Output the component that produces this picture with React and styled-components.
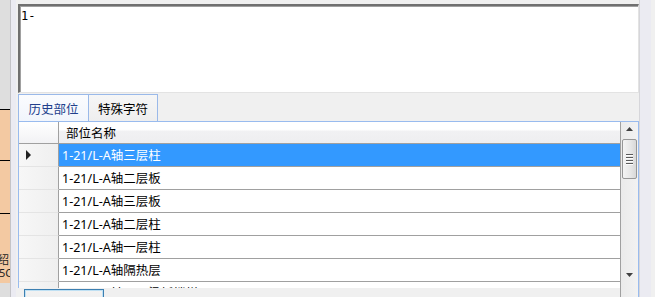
import React from "react";
import styled, { createGlobalStyle } from "styled-components";

const Global = createGlobalStyle`
  html, body { margin: 0; padding: 0; background: #f0f0f0; }
  body { width: 655px; height: 297px; overflow: hidden; }
`;

const UI_FONT = `"Noto Sans", "Noto Sans CJK SC", sans-serif`;

const Page = styled.div`
  display: flex;
  width: 655px;
  height: 297px;
  overflow: hidden;
  background: #f0f0f0;
  font-family: ${UI_FONT};
  font-size: 12px;
  color: #000;
`;

const LeftStrip = styled.div`
  width: 10px;
  flex: none;
  display: flex;
  flex-direction: column;
  background: #dedede;
  overflow: hidden;
`;

const StripGap = styled.div`
  height: ${(p) => p.$h}px;
  flex: none;
`;

const PeachCell = styled.div`
  height: ${(p) => p.$h}px;
  flex: none;
  background: #f3c9a2;
  border-top: ${(p) => (p.$line ? "1px solid #000" : "none")};
  display: flex;
  flex-direction: column;
  justify-content: flex-end;
  gap: 1px;
  overflow: hidden;
  padding-bottom: 4px;
  box-sizing: border-box;
`;

const PeachText = styled.span`
  display: block;
  white-space: nowrap;
  line-height: 12px;
  height: 12px;
  overflow: hidden;
  font-size: 11px;
  margin-left: ${(p) => p.$shift}px;
  color: #222;
`;

const Divider = styled.div`
  width: ${(p) => p.$w}px;
  flex: none;
  box-sizing: border-box;
  border-left: 1px solid ${(p) => p.$line};
  border-right: ${(p) => p.$gap}px solid #f0f0f0;
  background: #ebebf2;
`;

const Main = styled.div`
  position: relative;
  width: 621px;
  flex: none;
  display: flex;
  flex-direction: column;
  padding-top: 4px;
  box-sizing: border-box;
`;

const TextBox = styled.div`
  height: 89px;
  flex: none;
  box-sizing: border-box;
  background: #fff;
  border-top: 2px solid #707070;
  border-left: 2px solid #707070;
  border-right: 1px solid #e3e3e3;
  border-bottom: 1px solid #e3e3e3;
  box-shadow: inset 1px 1px 0 #a0a0a0;
  padding: 3px 1px;
  font-family: "DejaVu Sans Mono", monospace;
  font-size: 12px;
  line-height: 15px;
`;

const TabStrip = styled.div`
  display: flex;
  height: 27px;
  margin-top: 1px;
  flex: none;
`;

const Tab = styled.div`
  width: ${(p) => p.$w}px;
  box-sizing: border-box;
  border: 1px solid #9ab9e9;
  border-bottom: none;
  margin-left: ${(p) => (p.$first ? 0 : -1)}px;
  display: flex;
  align-items: center;
  justify-content: center;
  padding-top: 1px;
  background: ${(p) =>
    p.$active
      ? "linear-gradient(#fbfcfe, #f1f5fc)"
      : "linear-gradient(#f6f6f6, #eeeeee)"};
  color: ${(p) => (p.$active ? "#22408c" : "#000")};
  font-size: 12.5px;
`;

const Grid = styled.div`
  height: 176px;
  flex: none;
  box-sizing: border-box;
  border: 1px solid #99bbee;
  border-bottom: none;
  display: flex;
  overflow: hidden;
  background: #fff;
`;

const Table = styled.div`
  width: 602px;
  flex: none;
  display: flex;
  flex-direction: column;
`;

const Row = styled.div`
  display: flex;
  flex: none;
  height: ${(p) => p.$h}px;
`;

const RowHead = styled.div`
  width: 40px;
  flex: none;
  box-sizing: border-box;
  border-right: 1px solid #a0a0a0;
  border-bottom: 1px solid ${(p) => (p.$header ? "#a0a0a0" : "#e4e4e4")};
  background: ${(p) =>
    p.$header
      ? "linear-gradient(#ffffff, #f2f2f4)"
      : "linear-gradient(90deg, #f7f7f7, #efefef)"};
  display: flex;
  align-items: center;
  padding-left: 7px;
`;

const Cell = styled.div`
  flex: 1;
  box-sizing: border-box;
  border-right: 1px solid #a0a0a0;
  border-bottom: 1px solid #a0a0a0;
  background: ${(p) =>
    p.$header
      ? "linear-gradient(#ffffff 0%, #ffffff 35%, #f1f1f3 45%, #eeeef0 100%)"
      : p.$selected
      ? "#3399ff"
      : "#fff"};
  color: ${(p) => (p.$selected ? "#fff" : "#000")};
  display: flex;
  align-items: center;
  padding-left: ${(p) => (p.$header ? 7 : 3)}px;
  padding-bottom: 1px;
  white-space: nowrap;
  overflow: hidden;
  font-size: 12.5px;
`;

const Pointer = styled.svg`
  display: block;
`;

const ScrollBar = styled.div`
  width: 17px;
  flex: none;
  display: flex;
  flex-direction: column;
  background: linear-gradient(90deg, #ebebeb, #f2f2f2);
`;

const ArrowBox = styled.div`
  height: ${(p) => p.$h}px;
  flex: none;
  display: flex;
  align-items: ${(p) => p.$align};
  justify-content: center;
  padding: ${(p) => p.$pad};
  box-sizing: border-box;
`;

const Thumb = styled.div`
  height: 40px;
  flex: none;
  margin: 0 1px 0 1px;
  box-sizing: border-box;
  border: 1px solid #979797;
  border-radius: 2px;
  background: linear-gradient(90deg, #f4f4f4, #e6e6e6 60%, #d8d8d8);
  display: flex;
  flex-direction: column;
  align-items: center;
  justify-content: center;
  gap: 1px;
`;

const Grip = styled.div`
  width: 7px;
  height: 1px;
  background: #5a5a5a;
  box-shadow: 0 1px 0 #fdfdfd;
  margin-bottom: 1px;
`;

const Track = styled.div`
  flex: 1;
`;

const BottomBar = styled.div`
  position: absolute;
  left: 0;
  top: 288px;
  width: 602px;
  height: 9px;
  background: #f0f0f0;
  padding-left: 6px;
  padding-top: 1px;
  box-sizing: border-box;
`;

const Button = styled.div`
  width: 80px;
  height: 24px;
  box-sizing: border-box;
  border: 1px solid #3c7fb1;
  box-shadow: inset 0 0 0 1px #bfe0f3;
  background: linear-gradient(#f2f2f2, #ebebeb);
`;

const rows = [
  "1-21/L-A轴三层柱",
  "1-21/L-A轴二层板",
  "1-21/L-A轴三层板",
  "1-21/L-A轴二层柱",
  "1-21/L-A轴一层柱",
  "1-21/L-A轴隔热层",
  "1-21/L-A轴一层梁板楼梯",
];

function Arrow({ up }) {
  return (
    <svg width="7" height="4" viewBox="0 0 7 4">
      <polygon
        points={up ? "3.5,0 7,4 0,4" : "0,0 7,0 3.5,4"}
        fill="#404040"
      />
    </svg>
  );
}

export default function App() {
  return (
    <Page>
      <Global />
      <LeftStrip>
        <StripGap $h={109} />
        <PeachCell $h={51} $line />
        <PeachCell $h={53} $line />
        <PeachCell $h={70} $line>
          <PeachText $shift={-2}>绍</PeachText>
          <PeachText $shift={-1}>5C</PeachText>
        </PeachCell>
      </LeftStrip>
      <Divider $w={8} $line="#c4c4c8" $gap={2} />
      <Main>
        <TextBox>1-</TextBox>
        <TabStrip>
          <Tab $w={71} $first $active>
            历史部位
          </Tab>
          <Tab $w={70}>特殊字符</Tab>
        </TabStrip>
        <Grid>
          <Table>
            <Row $h={22}>
              <RowHead $header />
              <Cell $header>部位名称</Cell>
            </Row>
            {rows.map((r, i) => (
              <Row key={i} $h={23}>
                <RowHead>
                  {i === 0 && (
                    <Pointer width="5" height="10" viewBox="0 0 5 10">
                      <polygon points="0,0 5,5 0,10" fill="#222" />
                    </Pointer>
                  )}
                </RowHead>
                <Cell $selected={i === 0}>{r}</Cell>
              </Row>
            ))}
          </Table>
          <ScrollBar>
            <ArrowBox $h={17} $align="flex-start" $pad="5px 0 0 0">
              <Arrow up />
            </ArrowBox>
            <Thumb>
              <Grip />
              <Grip />
              <Grip />
              <Grip />
            </Thumb>
            <Track />
            <ArrowBox $h={24} $align="flex-start" $pad="0">
              <Arrow />
            </ArrowBox>
          </ScrollBar>
        </Grid>
        <BottomBar>
          <Button />
        </BottomBar>
      </Main>
      <Divider $w={17} $line="#d6d6da" $gap={5} />
    </Page>
  );
}
